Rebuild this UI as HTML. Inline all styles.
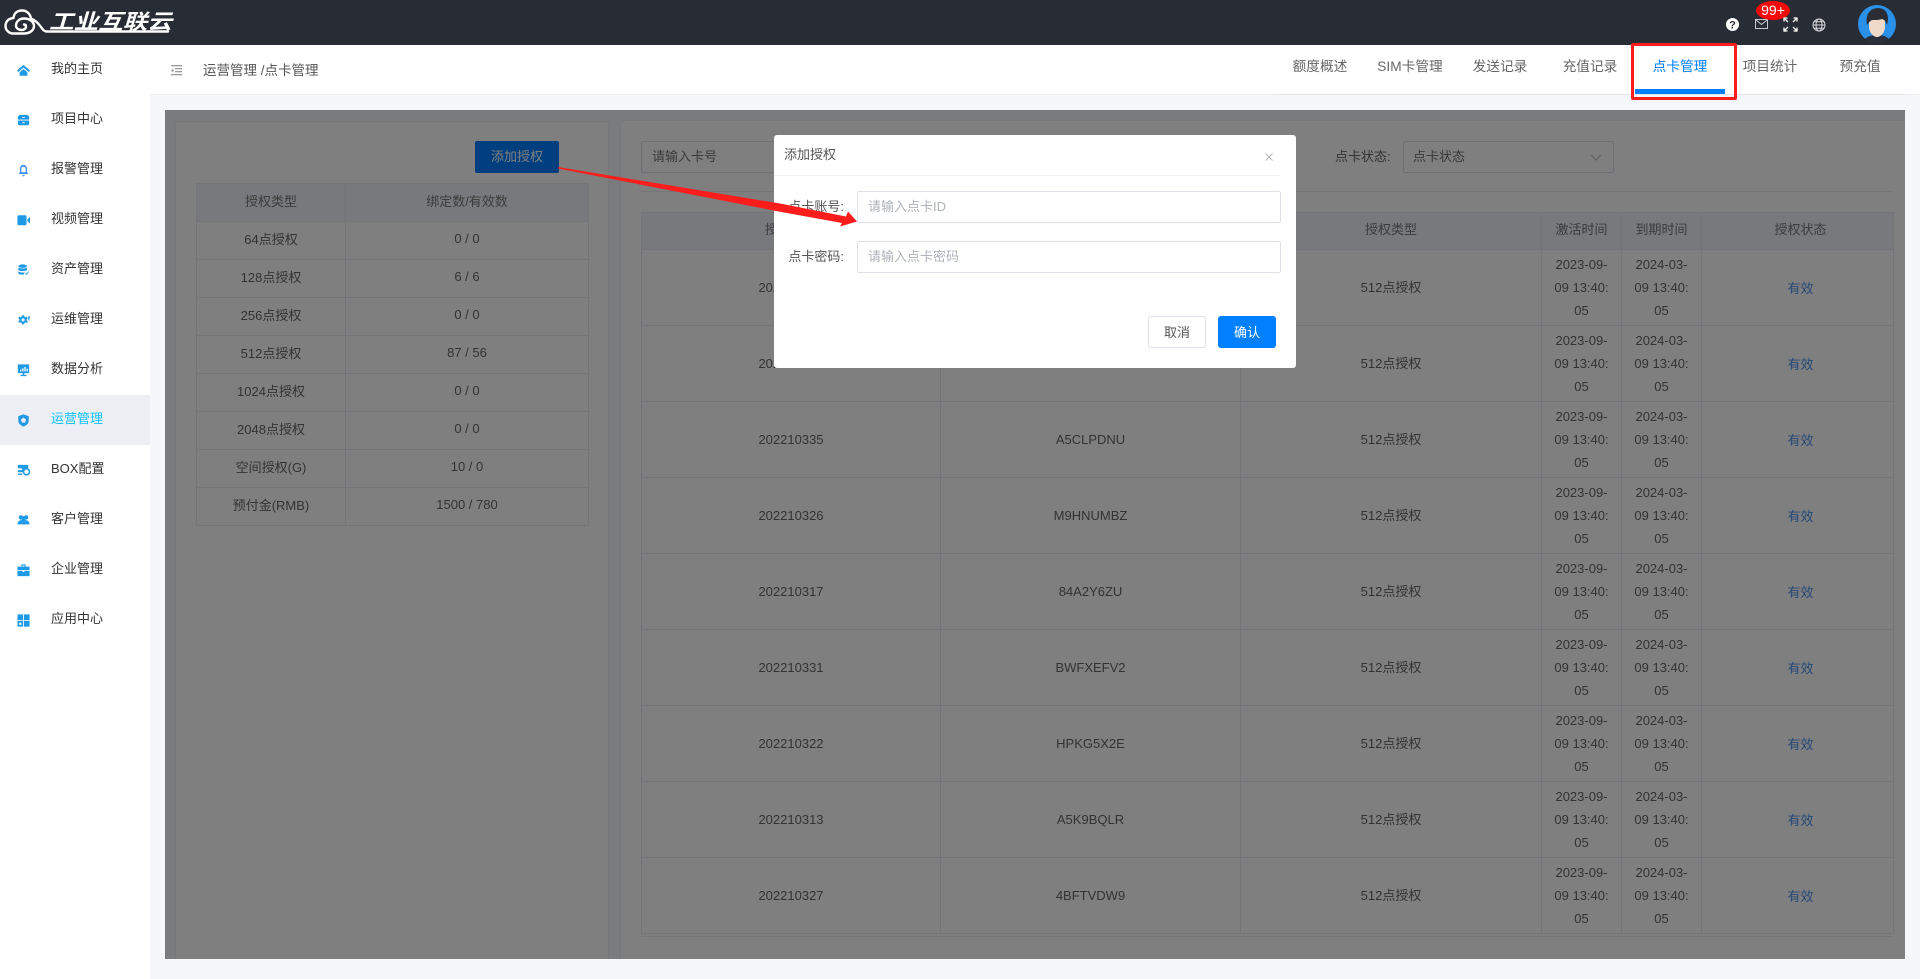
<!DOCTYPE html>
<html lang="zh-CN"><head><meta charset="utf-8"><title>点卡管理</title>
<style>
*{box-sizing:border-box;margin:0;padding:0}
html,body{width:1920px;height:979px;overflow:hidden;background:#f5f7fa;font-family:"Liberation Sans","Noto Sans CJK SC",sans-serif;font-size:13px;color:#333}
.a{position:absolute}
#top{left:0;top:0;width:1920px;height:45px;background:#282c35}
#side{left:0;top:45px;width:150px;height:934px;background:#fff}
.mi{position:absolute;left:0;width:150px;height:50px;line-height:48px;padding-left:51px;font-size:13px;color:#333}
.mi svg{position:absolute;left:17px;top:19px;width:13px;height:13px;fill:#1f9ae6}
.mi.on{background:#eeeff4;color:#12c2ff}
#bar{left:150px;top:45px;width:1770px;height:50px;background:#fff;border-bottom:1px solid #eceef2}
#crumb{left:203px;top:61px;font-size:13.500px;color:#555;line-height:20px}
.tab{position:absolute;top:45px;width:90px;height:49px;line-height:43px;text-align:center;font-size:13.700px;color:#666}
#panel{left:165px;top:110px;width:1740px;height:849px;overflow:hidden;background:#f5f7fa}
.card{position:absolute;background:#fff;border:1px solid #eceef4;border-radius:4px}
table{border-collapse:collapse;table-layout:fixed;position:absolute;color:#666;font-size:13px;text-align:center}
td,th{border:1px solid #e9ebf2;font-weight:normal;padding:0}
th{background:#f1f3f8;color:#777;padding-bottom:5px}
#lt tr{height:38px}
#lt td{padding-bottom:5px}
#rt tr{height:76px}
#rt tr.h{height:37px}
#rt td{line-height:23px}
#rt td.s{color:#4a90f0;padding:2px 0 0 6px}
#ov{left:165px;top:110px;width:1740px;height:849px;background:rgba(0,0,0,.5)}
#modal{left:774px;top:135px;width:522px;height:233px;background:#fff;border-radius:3px}
.inp{position:absolute;border:1px solid #dfe1ea;border-radius:2px;background:#fff;color:#aeb2ba;font-size:13px;line-height:30px;padding-left:10px}
.btn{position:absolute;border-radius:3px;text-align:center;font-size:13px;line-height:31px}
</style></head><body>

<div id="top" class="a">
<svg class="a" style="left:0;top:0" width="190" height="45" viewBox="0 0 190 45">
<path d="M168 31.500H47C43 31.500 42 28 39 24.500C37 22 34 20 31 18.500C30 13 26 10.500 22 10.500C17 10.500 14 13.500 13.500 18C8 18.500 5.500 22 5.500 26C5.500 30 9 33.500 13 33.500H24C30 33.500 34 30 34 26C34 22 30 18.500 24 18.500C19 18.500 16 22 16 25.500C16 28.500 19 30 21.500 30C24 30 26 28.500 26 26.500C26 25 25 24.500 24 24.500" fill="none" stroke="#fff" stroke-width="2.400" stroke-linecap="round" stroke-linejoin="round"/>
<text x="49" y="29" font-family="'Noto Sans CJK SC',sans-serif" font-size="21" font-weight="700" font-style="italic" fill="#fff" textLength="123" lengthAdjust="spacingAndGlyphs">工业互联云</text>
</svg>
<svg class="a" style="left:1725px;top:17px" width="15" height="15" viewBox="0 0 15 15"><circle cx="7.500" cy="7.500" r="6.500" fill="#fff"/><text x="7.500" y="11.500" text-anchor="middle" font-size="11" font-weight="700" fill="#282c35" font-family="Liberation Sans">?</text></svg>
<svg class="a" style="left:1755px;top:19px" width="14" height="11" viewBox="0 0 14 11" fill="none" stroke="#c8cad0" stroke-width="1"><rect x=".5" y=".5" width="12" height="9"/><path d="M1 1L6.500 5.500L12 1"/></svg>
<div class="a" style="left:1756px;top:1px;width:34px;height:19px;border-radius:50%;background:#f40a0a;color:#fff;font-size:14px;line-height:18px;text-align:center">99+</div>
<svg class="a" style="left:1783px;top:17px" width="15" height="15" viewBox="0 0 15 15" fill="none" stroke="#fff" stroke-width="1.300"><path d="M1 4.500V1H4.500M1 1L5 5M14 4.500V1H10.500M14 1L10 5M1 10.500V14H4.500M1 14L5 10M14 10.500V14H10.500M14 14L10 10"/></svg>
<svg class="a" style="left:1812px;top:18px" width="14" height="14" viewBox="0 0 14 14" fill="none" stroke="#d8d9dc" stroke-width="1"><circle cx="7" cy="7" r="6"/><ellipse cx="7" cy="7" rx="3" ry="6"/><path d="M1 7H13M2 3.800H12M2 10.200H12"/></svg>
<svg class="a" style="left:1858px;top:5px" width="38" height="38" viewBox="0 0 38 38"><circle cx="19" cy="19" r="19" fill="#2b90e8"/><path d="M7 34C10 31 14 30 19 30C24 30 28 31 31 34C27 37 23 38 19 38C15 38 11 37 7 34Z" fill="#2b2f3a"/><path d="M11 13H27V22C27 27 23 32 19 32C15 32 11 27 11 22Z" fill="#efd9c8"/><path d="M9 20C7 10 12 3 20 3C28 3 32 10 29 20C28 17 27 15 24 14C20 15.500 15 14.500 13 15.500C11 17 10 18.500 9 20Z" fill="#2a2d33"/></svg>
</div>

<div id="side" class="a">
<div class="mi" style="top:0"><svg viewBox="0 0 15 15"><path d="M7.500 1L15 7.500L13.500 9.200L7.500 4.200L1.500 9.200L0 7.500ZM3 9.500L7.500 5.800L12 9.500V13.500H3Z"/></svg>我的主页</div>
<div class="mi" style="top:50px"><svg viewBox="0 0 15 15"><path d="M3 1H12L14 3V6.500H1V3ZM1 7.500H14V12L13 13H2L1 12ZM6 3.500V4.500H9V3.500ZM6 9.500V10.500H9V9.500Z" fill-rule="evenodd"/></svg>项目中心</div>
<div class="mi" style="top:100px"><svg viewBox="0 0 15 15" style="fill:#3d8df0"><path d="M7.500 1C10 1 11.500 3 11.500 5.500V9L13 11.500H2L3.500 9V5.500C3.500 3 5 1 7.500 1ZM5.800 12.500H9.200L7.500 14.500Z M5 5.500V9.500H10V5.500C10 4 9 3 7.500 3C6 3 5 4 5 5.500Z" fill-rule="evenodd"/></svg>报警管理</div>
<div class="mi" style="top:150px"><svg viewBox="0 0 15 15"><path d="M1.500 1.500H10L11 2.500V12L10 13H1.500L0.500 12V2.500ZM12 6L15 3.500V11L12 8.500Z"/></svg>视频管理</div>
<div class="mi" style="top:200px"><svg viewBox="0 0 15 15"><ellipse cx="6.500" cy="2.500" rx="5" ry="2"/><path d="M1.500 4C3 5.500 10 5.500 11.500 4V7C10 8.500 3 8.500 1.500 7ZM1.500 8.500C3 10 8 10 9 9.500L8 12C5 12.500 2.500 12 1.500 11ZM9.500 11.500L11 12.500L14 9L13 8.500L11 11L10 10.500Z"/></svg>资产管理</div>
<div class="mi" style="top:250px"><svg viewBox="0 0 15 15"><path d="M6 1.500H8L8.500 3L10 3.800L11.500 3.200L12.500 5L11.300 6L11.300 7.500L12.500 8.500L11.500 10.200L10 9.600L8.500 10.500L8 12H6L5.500 10.500L4 9.600L2.500 10.200L1.500 8.500L2.700 7.500V6L1.500 5L2.500 3.200L4 3.800L5.500 3ZM7 5A1.800 1.800 0 1 0 7 8.600A1.800 1.800 0 1 0 7 5Z" fill-rule="evenodd"/><path d="M13 2L15 3L14 8L13 7Z"/></svg>运维管理</div>
<div class="mi" style="top:300px"><svg viewBox="0 0 15 15"><path d="M1 0.500H14V10.500H8.500V12.500H11V14H4V12.500H6.500V10.500H1ZM3.500 8.500H5V6.500H3.500ZM6 8.500H7.500V5H6ZM8.500 8.500H10V3.500H8.500ZM11 8.500H12.500V5.500H11Z" fill-rule="evenodd"/></svg>数据分析</div>
<div class="mi on" style="top:350px"><svg viewBox="0 0 15 15"><path d="M7.500 0.500L13.500 2.500V8C13.500 11 10.500 13.500 7.500 14.500C4.500 13.500 1.500 11 1.500 8V2.500ZM7.500 4L4.500 6.500L5.800 10L9.200 10L10.500 6.500Z" fill-rule="evenodd"/></svg>运营管理</div>
<div class="mi" style="top:400px"><svg viewBox="0 0 15 15"><path d="M1 1H13V5A4.500 4.500 0 0 0 8 9.500H1V7H6V5H1ZM1 11H6V12.500H1Z"/><circle cx="11" cy="9" r="3.500" fill="none" stroke="#1f9ae6" stroke-width="1.800"/></svg>BOX配置</div>
<div class="mi" style="top:450px"><svg viewBox="0 0 15 15"><circle cx="4.500" cy="4" r="2.500"/><circle cx="10.500" cy="4" r="2.500"/><circle cx="7.500" cy="5" r="2.500"/><path d="M0.500 12C1 8 3 7 5 7H10C12 7 14 8 14.500 12Z"/></svg>客户管理</div>
<div class="mi" style="top:500px"><svg viewBox="0 0 15 15"><path d="M5 0.500H10V3H14.500V7H0.500V3H5ZM6.300 1.700V3H8.700V1.700ZM0.500 8H6.500V9.200H8.500V8H14.500V14H0.500Z" fill-rule="evenodd"/></svg>企业管理</div>
<div class="mi" style="top:550px"><svg viewBox="0 0 15 15"><path d="M0.500 0.500H7V7H0.500ZM8 0.500H14.500V7H8ZM8 8H14.500V14.500H8ZM0.500 8H7V14.500H0.500ZM2.500 10V12.500H5V10Z" fill-rule="evenodd"/></svg>应用中心</div>
</div>

<div id="bar" class="a"></div>
<svg class="a" style="left:170px;top:64px" width="13" height="13" viewBox="0 0 13 13" fill="#9a9a9a"><rect x="1" y="1" width="11" height="1.300"/><rect x="5" y="4" width="7" height="1.300"/><rect x="5" y="7" width="7" height="1.300"/><rect x="1" y="10" width="11" height="1.300"/><path d="M1 6.500L3.500 4.500V8.500Z"/></svg>
<div id="crumb" class="a">运营管理 /点卡管理</div>

<div class="a" style="left:1275px;top:94px;width:630px;height:1px;background:#e2e4ec"></div>
<div class="tab" style="left:1275px">额度概述</div>
<div class="tab" style="left:1365px">SIM卡管理</div>
<div class="tab" style="left:1455px">发送记录</div>
<div class="tab" style="left:1545px">充值记录</div>
<div class="tab" style="left:1635px;color:#007fff">点卡管理</div>
<div class="tab" style="left:1725px">项目统计</div>
<div class="tab" style="left:1815px">预充值</div>
<div class="a" style="left:1635px;top:89px;width:90px;height:5px;background:#007fff"></div>
<div class="a" style="left:1631px;top:43px;width:106px;height:57px;border:3px solid #fb1c1c;border-radius:2px"></div>

<div id="panel" class="a">
 <div class="card" style="left:10px;top:11px;width:434px;height:900px"></div>
 <div class="card" style="left:455px;top:10px;width:1330px;height:900px;border-radius:4px"></div>
 <div class="a" style="left:310px;top:31px;width:84px;height:32px;background:#007fff;border-radius:2px;color:#fff;text-align:center;line-height:31px">添加授权</div>
 <table id="lt" style="left:31px;top:73px;width:392px">
  <colgroup><col style="width:149px"><col style="width:243px"></colgroup>
  <tr><th>授权类型</th><th>绑定数/有效数</th></tr>
  <tr><td>64点授权</td><td>0 / 0</td></tr>
  <tr><td>128点授权</td><td>6 / 6</td></tr>
  <tr><td>256点授权</td><td>0 / 0</td></tr>
  <tr><td>512点授权</td><td>87 / 56</td></tr>
  <tr><td>1024点授权</td><td>0 / 0</td></tr>
  <tr><td>2048点授权</td><td>0 / 0</td></tr>
  <tr><td>空间授权(G)</td><td>10 / 0</td></tr>
  <tr><td>预付金(RMB)</td><td>1500 / 780</td></tr>
 </table>
 <div class="inp" style="left:476px;top:31px;width:270px;height:32px;color:#757575">请输入卡号</div>
 <div class="a" style="left:1170px;top:36px;color:#666">点卡状态:</div>
 <div class="inp" style="left:1238px;top:31px;width:211px;height:32px;color:#757575;padding-left:9px">点卡状态</div>
 <svg class="a" style="left:1425px;top:44px" width="12" height="7" viewBox="0 0 12 7" fill="none" stroke="#b9bcc4" stroke-width="1"><path d="M1 1L6 6L11 1"/></svg>
 <div class="a" style="left:476px;top:81px;width:1252px;height:1px;background:#e6e8ef"></div>
 <table id="rt" style="left:476px;top:102px;width:1252px">
  <colgroup><col style="width:299px"><col style="width:300px"><col style="width:301px"><col style="width:80px"><col style="width:80px"><col style="width:192px"></colgroup>
  <tr class="h"><th>授权卡号</th><th>授权密码</th><th>授权类型</th><th>激活时间</th><th>到期时间</th><th style="padding-left:6px">授权状态</th></tr>
  <tr><td>202210344</td><td>K7DNW3QS</td><td>512点授权</td><td>2023-09-<br>09 13:40:<br>05</td><td>2024-03-<br>09 13:40:<br>05</td><td class="s">有效</td></tr>
  <tr><td>202210340</td><td>T2MXLE8R</td><td>512点授权</td><td>2023-09-<br>09 13:40:<br>05</td><td>2024-03-<br>09 13:40:<br>05</td><td class="s">有效</td></tr>
  <tr><td>202210335</td><td>A5CLPDNU</td><td>512点授权</td><td>2023-09-<br>09 13:40:<br>05</td><td>2024-03-<br>09 13:40:<br>05</td><td class="s">有效</td></tr>
  <tr><td>202210326</td><td>M9HNUMBZ</td><td>512点授权</td><td>2023-09-<br>09 13:40:<br>05</td><td>2024-03-<br>09 13:40:<br>05</td><td class="s">有效</td></tr>
  <tr><td>202210317</td><td>84A2Y6ZU</td><td>512点授权</td><td>2023-09-<br>09 13:40:<br>05</td><td>2024-03-<br>09 13:40:<br>05</td><td class="s">有效</td></tr>
  <tr><td>202210331</td><td>BWFXEFV2</td><td>512点授权</td><td>2023-09-<br>09 13:40:<br>05</td><td>2024-03-<br>09 13:40:<br>05</td><td class="s">有效</td></tr>
  <tr><td>202210322</td><td>HPKG5X2E</td><td>512点授权</td><td>2023-09-<br>09 13:40:<br>05</td><td>2024-03-<br>09 13:40:<br>05</td><td class="s">有效</td></tr>
  <tr><td>202210313</td><td>A5K9BQLR</td><td>512点授权</td><td>2023-09-<br>09 13:40:<br>05</td><td>2024-03-<br>09 13:40:<br>05</td><td class="s">有效</td></tr>
  <tr><td>202210327</td><td>4BFTVDW9</td><td>512点授权</td><td>2023-09-<br>09 13:40:<br>05</td><td>2024-03-<br>09 13:40:<br>05</td><td class="s">有效</td></tr>
 </table>
 <div class="a" style="left:476px;top:826px;width:1252px;height:1px;background:#e9ebf2"></div>
</div>
<div id="ov" class="a"></div>

<div id="modal" class="a">
 <div class="a" style="left:10px;top:10px;line-height:20px;color:#555">添加授权</div>
 <svg class="a" style="left:491px;top:18px" width="8" height="8" viewBox="0 0 9 9" stroke="#aaa" stroke-width="1"><path d="M.5 .5L8.500 8.500M8.500 .5L.5 8.500"/></svg>
 <div class="a" style="left:0;top:40px;width:506px;height:1px;background:#f0f1f4"></div>
 <div class="a" style="left:0;top:62px;width:70px;text-align:right;color:#555;line-height:20px">点卡账号:</div>
 <div class="inp" style="left:83px;top:56px;width:424px;height:32px">请输入点卡ID</div>
 <div class="a" style="left:0;top:112px;width:70px;text-align:right;color:#555;line-height:20px">点卡密码:</div>
 <div class="inp" style="left:83px;top:106px;width:424px;height:32px">请输入点卡密码</div>
 <div class="btn" style="left:374px;top:181px;width:58px;height:32px;border:1px solid #dfe1ea;color:#555">取消</div>
 <div class="btn" style="left:444px;top:181px;width:58px;height:32px;background:#007fff;color:#fff;line-height:33px">确认</div>
</div>

<svg class="a" style="left:0;top:0;pointer-events:none" width="1920" height="979"><polygon points="558,167 780,203.500 846,216.500 848,211.500 857,221.500 840,226.500 842,223 780,211.700 558,168.500" fill="#fb1c1c"/></svg>
</body></html>
